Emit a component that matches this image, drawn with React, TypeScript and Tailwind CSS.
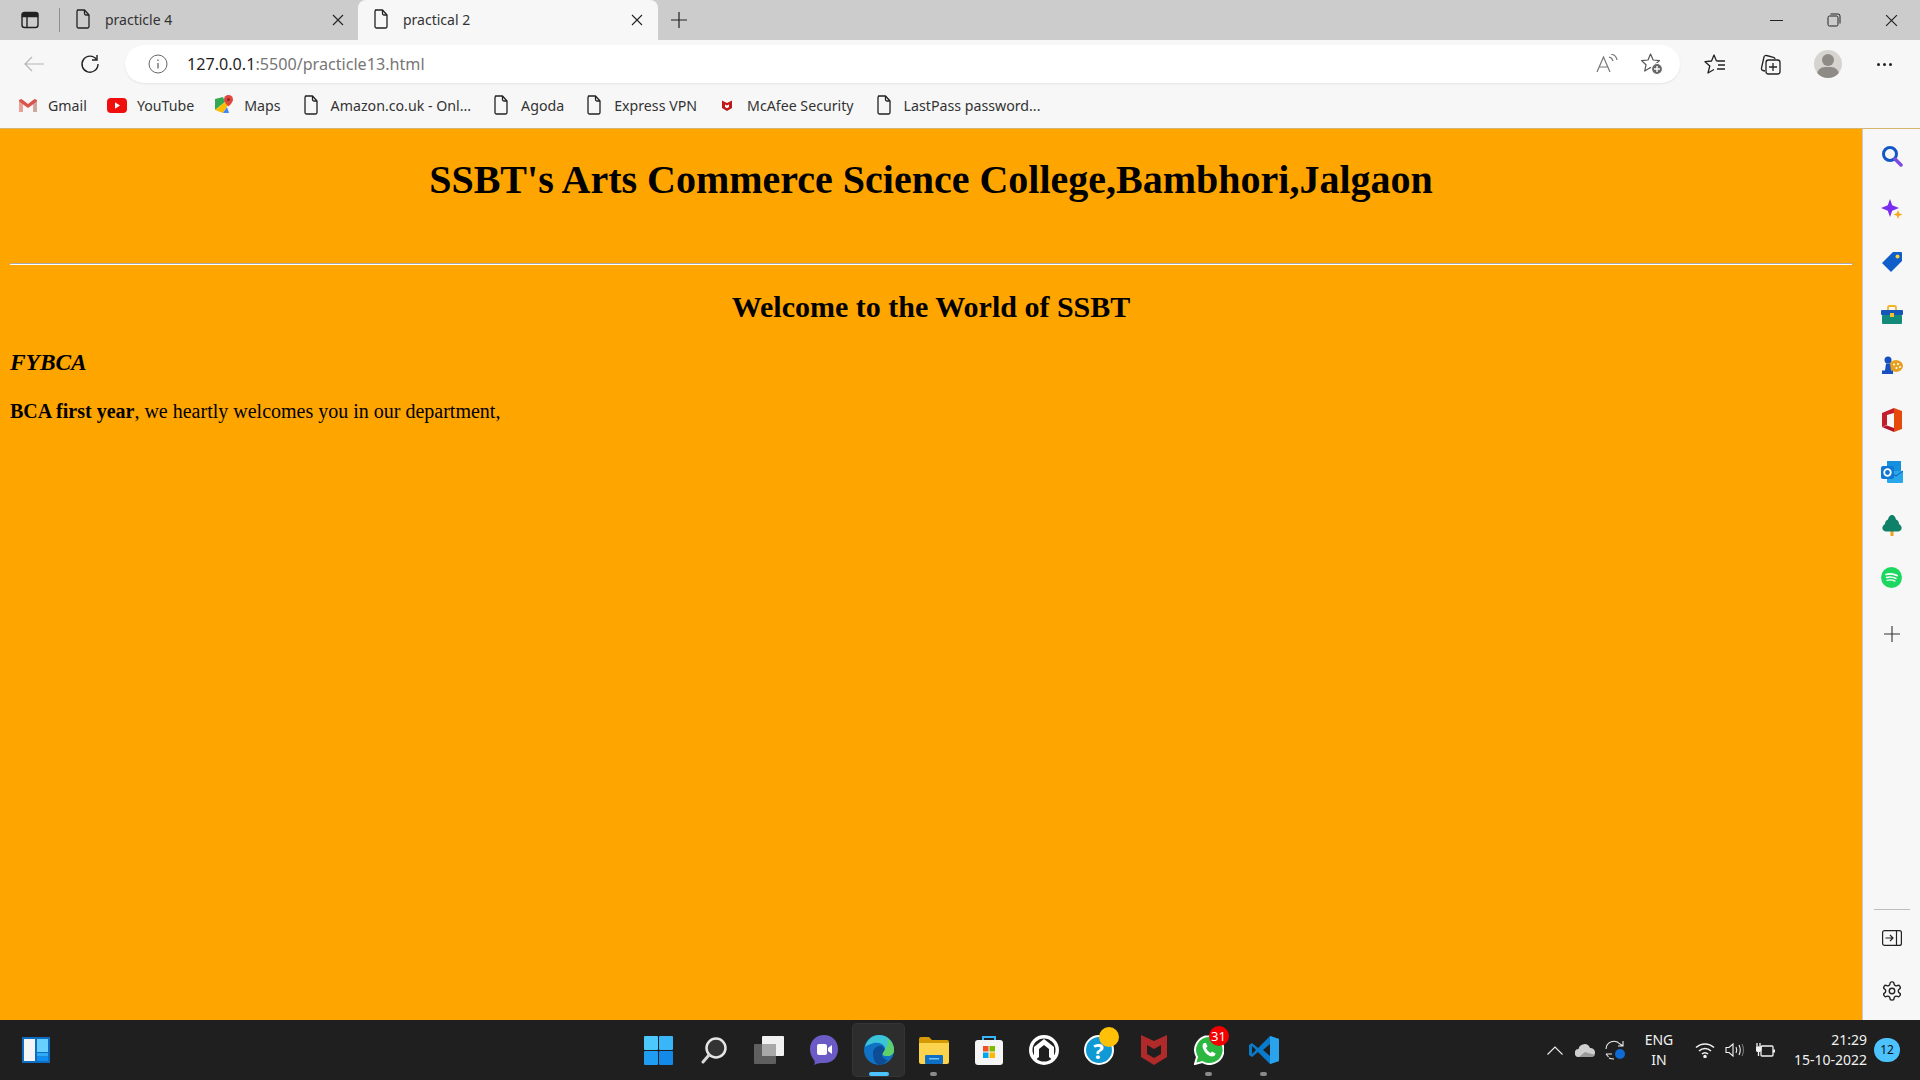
import type { ReactNode } from 'react';

const uiFont = "font-['Noto_Sans','Open_Sans',sans-serif]";

function DocIcon({ className = '' }: { className?: string }) {
  return (
    <svg width="16" height="20" viewBox="0 0 16 20" fill="none" stroke="#222" strokeWidth="1.3" className={className}>
      <path d="M2.5 1h7L14 6v11.5a1.5 1.5 0 0 1-1.5 1.5h-9A1.5 1.5 0 0 1 2 17.5v-15A1.5 1.5 0 0 1 3.500 1z" strokeLinejoin="round" />
      <path d="M9.500 1v3.500a1.500 1.500 0 0 0 1.500 1.500h3" />
    </svg>
  );
}

function CloseIcon({ size = 12, color = '#222' }: { size?: number; color?: string }) {
  return (
    <svg width={size} height={size} viewBox="0 0 12 12" stroke={color} strokeWidth="1.1">
      <path d="M1 1l10 10M11 1L1 11" />
    </svg>
  );
}

function Tab({ title, active }: { title: string; active?: boolean }) {
  return (
    <div className={`flex h-10 items-center ${active ? 'w-[300px] rounded-t-lg bg-[#f7f7f7] pl-[15px] pr-[15px]' : 'w-[298px] pl-[15px] pr-[14px]'}`}>
      <DocIcon className="mb-[2px]" />
      <span className="mb-[2px] ml-[14px] flex-1 text-[14px] text-[#333]">{title}</span>
      <CloseIcon />
    </div>
  );
}

function Bookmark({ icon, label }: { icon: ReactNode; label: string }) {
  return (
    <div className="flex items-center gap-[10px]">
      <span className="flex h-5 w-5 items-center justify-center">{icon}</span>
      <span className="text-[14.2px] text-[#333]">{label}</span>
    </div>
  );
}

const GmailIcon = (
  <svg width="20" height="16" viewBox="0 0 20 16">
    <path d="M1 15V3l2.500-1L10 7l6.500-5L19 3v12h-3.500V7L10 11 4.500 7v8z" fill="#d9534a" />
    <path d="M1 15h3.500V7L1 4z" fill="#e8a09a" />
    <path d="M15.500 15H19V4l-3.500 3z" fill="#c9a9a0" />
  </svg>
);

const YoutubeIcon = (
  <svg width="20" height="15" viewBox="0 0 20 15">
    <rect width="20" height="15" rx="4" fill="#f00d0d" />
    <path d="M8 4.300l5 3.200-5 3.200z" fill="#fff" />
  </svg>
);

const MapsIcon = (
  <svg width="20" height="20" viewBox="0 0 20 20">
    <path d="M1 4l8-2 2 5-10 8z" fill="#34a853" />
    <path d="M1 15l8 3 5-8-3-3z" fill="#fbbc04" />
    <path d="M9 18l6 0-2-6z" fill="#4285f4" />
    <path d="M14.500 0a4.500 4.500 0 0 1 4.500 4.500c0 3-4.500 7-4.500 7S10 7.500 10 4.500A4.500 4.500 0 0 1 14.500 0z" fill="#e0483e" />
    <circle cx="14.500" cy="4.500" r="1.500" fill="#8c2a22" />
  </svg>
);

const McafeeSmall = (
  <svg width="14" height="14" viewBox="0 0 14 14">
    <path d="M2 2.500L7 5l5-2.500V10l-5 3-5-3z" fill="#c01818" />
    <path d="M5 6.500l2 1 2-1v2.500l-2 1.200L5 9z" fill="#fff" />
  </svg>
);

function SidebarIcon({ children, className }: { children: ReactNode; className: string }) {
  return <div className={`flex w-full items-center justify-center ${className}`}>{children}</div>;
}

function TaskItem({ children, dot, active }: { children: ReactNode; dot?: boolean; active?: boolean }) {
  return (
    <div className="relative flex h-[52px] w-[55px] items-center justify-center">
      {active && <span className="absolute inset-x-[2px] inset-y-0 rounded bg-[#2d2d2d] ring-1 ring-[#353535]" />}
      <span className="relative flex items-center justify-center">{children}</span>
      {dot && <span className="absolute bottom-[0px] h-[4px] w-[7px] rounded-full bg-[#8a8a8a]" />}
      {active && <span className="absolute bottom-[0px] h-[4px] w-[20px] rounded-full bg-[#4cc2ff]" />}
    </div>
  );
}

export default function App() {
  return (
    <div className={`flex h-[1080px] w-[1920px] flex-col overflow-hidden bg-[#ffa500] ${uiFont}`}>
      {/* tab strip */}
      <div className="flex h-10 items-center bg-[#cccccc]">
        <div className="flex w-[60px] items-center pl-[20px]">
          <svg width="20" height="18" viewBox="0 0 20 18" fill="none" stroke="#222" strokeWidth="1.4">
            <rect x="2" y="1.500" width="16" height="15" rx="2.500" />
            <path d="M2.500 2.500h15v3h-15z" fill="#222" />
            <path d="M7 5v11" />
          </svg>
          <span className="ml-[19px] h-6 w-px bg-[#8f8f8f]" />
        </div>
        <Tab title="practicle 4" />
        <Tab title="practical 2" active />
        <svg width="18" height="18" viewBox="0 0 18 18" stroke="#222" strokeWidth="1.2" className="ml-[12px]">
          <path d="M9 1v16M1 9h16" />
        </svg>
        <div className="ml-auto flex items-center">
          <span className="h-px w-[13px] bg-[#222]" />
          <svg width="14" height="14" viewBox="0 0 14 14" fill="none" stroke="#222" strokeWidth="1" className="ml-[44px]">
            <rect x="1" y="3" width="10" height="10" rx="1.500" />
            <path d="M3.500 1h7.500a2 2 0 0 1 2 2v7.500" />
          </svg>
          <span className="ml-[44px] mr-[22px]">
            <CloseIcon size={13} />
          </span>
        </div>
      </div>

      {/* address bar */}
      <div className="flex h-12 items-center bg-[#f7f7f7]">
        <svg width="20" height="16" viewBox="0 0 20 16" fill="none" stroke="#b5b5b5" strokeWidth="1.2" className="ml-[24px]">
          <path d="M20 8H1M8 1L1 8l7 7" />
        </svg>
        <svg width="20" height="20" viewBox="0 0 20 20" fill="none" stroke="#222" strokeWidth="1.4" className="ml-[36px]">
          <path d="M16.500 5.500A8 8 0 1 0 18 10" />
          <path d="M17 1v5h-5" />
        </svg>
        <div className="ml-[25px] flex h-[38px] w-[1555px] items-center rounded-full bg-white pl-[23px] shadow-[0_1px_2px_rgba(0,0,0,0.08)]">
          <svg width="20" height="20" viewBox="0 0 20 20" fill="none" stroke="#666" strokeWidth="1">
            <circle cx="10" cy="10" r="9" />
            <path d="M10 9v5.500M10 5.500v1.500" strokeWidth="1.300" />
          </svg>
          <span className="ml-[19px] text-[16.15px] text-[#1f1f1f]">
            127.0.0.1<span className="text-[#767676]">:5500/practicle13.html</span>
          </span>
          <div className="ml-auto flex items-center">
            <svg width="22" height="20" viewBox="0 0 22 20" fill="none" stroke="#777" strokeWidth="1.200">
              <path d="M1 18L7.500 3 14 18M3.500 13h8" />
              <path d="M13 3c2 .5 3.500 2 4 4M15 0c3 .6 5.500 3 6 6" />
            </svg>
            <svg width="24" height="24" viewBox="0 0 24 24" fill="none" stroke="#555" strokeWidth="1.200" className="ml-[22px] mr-[16px]">
              <path d="M10.500 2l2.700 6 6.300.6-4.800 4.200 1 5.700-5.200-3-5.800 3.500 1.300-6.200L1.500 8.600 8 8z" strokeLinejoin="round" />
              <circle cx="17" cy="17" r="5.500" fill="#666" stroke="#fff" />
              <path d="M17 14v6M14 17h6" stroke="#fff" strokeWidth="1.400" />
            </svg>
          </div>
        </div>
        <svg width="22" height="22" viewBox="0 0 22 22" fill="none" stroke="#222" strokeWidth="1.300" className="ml-[24px]">
          <path d="M12.500 8H21M14 12h7M13 16h8M12.500 8L10 2 7.500 8 1 8.700l4.800 4.300L4 20l6-3.500" strokeLinejoin="round" />
        </svg>
        <svg width="22" height="22" viewBox="0 0 22 22" fill="none" stroke="#222" strokeWidth="1.300" className="ml-[33px]">
          <path d="M6 18l-2-.5a2 2 0 0 1-1.500-2.500L5 4a2 2 0 0 1 2.500-1.500l7 1.800a2 2 0 0 1 1.500 1.700" />
          <rect x="7" y="7" width="14" height="14" rx="2.500" />
          <path d="M14 10v8M10 14h8" />
        </svg>
        <div className="relative ml-[33px] h-7 w-7 overflow-hidden rounded-full bg-[#d6d4d0]">
          <span className="absolute left-[8px] top-[4px] h-3 w-3 rounded-full bg-[#8e8a86]" />
          <span className="absolute left-[3px] top-[17px] h-[16px] w-[22px] rounded-full bg-[#8e8a86]" />
        </div>
        <div className="ml-[35px] flex gap-[3px]">
          <span className="h-[3px] w-[3px] rounded-full bg-[#222]" />
          <span className="h-[3px] w-[3px] rounded-full bg-[#222]" />
          <span className="h-[3px] w-[3px] rounded-full bg-[#222]" />
        </div>
      </div>

      {/* bookmarks */}
      <div className="flex h-[41px] items-center gap-5 border-b border-[#d5b570] bg-[#f7f7f7] pb-[5px] pl-[18px]">
        <Bookmark icon={GmailIcon} label="Gmail" />
        <Bookmark icon={YoutubeIcon} label="YouTube" />
        <Bookmark icon={MapsIcon} label="Maps" />
        <Bookmark icon={<DocIcon />} label="Amazon.co.uk - Onl..." />
        <Bookmark icon={<DocIcon />} label="Agoda" />
        <Bookmark icon={<DocIcon />} label="Express VPN" />
        <Bookmark icon={McafeeSmall} label="McAfee Security" />
        <Bookmark icon={<DocIcon />} label="LastPass password..." />
      </div>

      <div className="flex min-h-0 flex-1">
        {/* page */}
        <main className="w-[1862px] px-[10px] font-['Liberation_Serif',serif] text-black">
          <h1 className="mt-[28px] text-center text-[40px] font-bold leading-[46px]">
            SSBT's Arts Commerce Science College,Bambhori,Jalgaon
          </h1>
          <div className="mt-[60px] h-[2px] border-t border-[#a9a9a9] bg-white" />
          <h2 className="mt-[25px] text-center text-[30px] font-bold leading-[34px]">Welcome to the World of SSBT</h2>
          <h3 className="mt-[25px] text-[23.4px] font-bold italic leading-[27px]">FYBCA</h3>
          <p className="mt-[24px] text-[20px] leading-[23px]">
            <b>BCA first year</b>, we heartly welcomes you in our department,
          </p>
        </main>

        {/* edge sidebar */}
        <aside className="relative w-[58px] border-l border-[#c9c9c9] bg-[#f7f7f7]">
          <SidebarIcon className="mt-[15px] h-6">
            <svg width="22" height="22" viewBox="0 0 22 22" fill="none">
              <circle cx="9" cy="9" r="6.500" stroke="#1257c8" strokeWidth="3" />
              <path d="M14 14l6 6" stroke="#7b4ae0" strokeWidth="3.500" strokeLinecap="round" />
            </svg>
          </SidebarIcon>
          <SidebarIcon className="mt-[30px] h-6">
            <svg width="22" height="22" viewBox="0 0 22 22">
              <path d="M9 0l2.200 6.300L18 9l-6.800 2.700L9 18l-2.200-6.300L0 9l6.800-2.700z" fill="#7a2cf0" />
              <path d="M17 11l1.200 3.300 3.300 1.200-3.300 1.200L17 20l-1.200-3.300-3.300-1.200 3.300-1.200z" fill="#f5a818" />
            </svg>
          </SidebarIcon>
          <SidebarIcon className="mt-[28px] h-6">
            <svg width="22" height="22" viewBox="0 0 22 22">
              <path d="M12 1h8a1 1 0 0 1 1 1v8L10 21 1 12z" fill="#0f5ec9" />
              <circle cx="16.500" cy="5.500" r="2" fill="#ffd23c" />
            </svg>
          </SidebarIcon>
          <SidebarIcon className="mt-[29px] h-6">
            <svg width="22" height="20" viewBox="0 0 22 20">
              <path d="M7 5V2.500A1.500 1.500 0 0 1 8.500 1h5A1.500 1.500 0 0 1 15 2.500V5" fill="none" stroke="#f0b429" strokeWidth="1.800" />
              <rect y="5" width="22" height="5" rx="1" fill="#1557b8" />
              <rect x="1" y="10" width="20" height="9" rx="1" fill="#138a7a" />
              <rect x="9" y="8" width="4" height="4" fill="#f5c030" />
            </svg>
          </SidebarIcon>
          <SidebarIcon className="mt-[27px] h-6">
            <svg width="22" height="20" viewBox="0 0 22 20">
              <ellipse cx="15" cy="10" rx="7" ry="6" fill="#e8a020" />
              <circle cx="7" cy="4" r="3.500" fill="#1650c0" />
              <path d="M5 7.500h4l1 7h2V18H1v-3.500h3z" fill="#1650c0" />
              <circle cx="13" cy="8.500" r="1" fill="#fff" />
              <circle cx="17" cy="8" r="1" fill="#fff" />
              <circle cx="19" cy="11" r="1" fill="#fff" />
              <circle cx="15.500" cy="12" r="1" fill="#fff" />
            </svg>
          </SidebarIcon>
          <SidebarIcon className="mt-[30px] h-6">
            <svg width="22" height="24" viewBox="0 0 22 24">
              <path d="M13 0l8 3v18l-8 3z" fill="#e64a0a" />
              <path d="M13 0L1 5v14l5-2V7l7-2z" fill="#c41e2c" />
              <path d="M1 19l12 5v-4l-7-2.500z" fill="#b3122c" />
            </svg>
          </SidebarIcon>
          <SidebarIcon className="mt-[28px] h-6">
            <svg width="22" height="22" viewBox="0 0 22 22">
              <rect x="6" y="0" width="14" height="11" fill="#1490df" />
              <path d="M6 10h16v11a1 1 0 0 1-1 1H7a1 1 0 0 1-1-1z" fill="#28a8ea" />
              <path d="M8 10l7 5 7-5" fill="none" stroke="#0a5fae" strokeWidth="1" />
              <rect y="5" width="13" height="13" rx="2" fill="#0f78d4" />
              <circle cx="6.500" cy="11.500" r="3.300" fill="none" stroke="#fff" strokeWidth="1.800" />
            </svg>
          </SidebarIcon>
          <SidebarIcon className="mt-[30px] h-6">
            <svg width="20" height="22" viewBox="0 0 20 22">
              <rect x="8.500" y="15" width="3" height="6" fill="#f0a020" />
              <path d="M10 0c2.500 0 3.500 2.500 4 4.500 2 .8 3 2.500 3 4.500 2 1 3 3 2.500 5-.5 1.500-2 2.500-3.500 2.500H4C2.500 16.500 1 15.500.5 14 0 12 1 10 3 9c0-2 1-3.700 3-4.500C6.500 2.500 7.500 0 10 0z" fill="#0e8168" />
            </svg>
          </SidebarIcon>
          <SidebarIcon className="mt-[27px] h-6">
            <svg width="21" height="21" viewBox="0 0 21 21" fill="none" stroke="#fff" strokeLinecap="round">
              <circle cx="10.500" cy="10.500" r="10.500" fill="#1ed760" stroke="none" />
              <path d="M5 7.500c3.500-1 7.500-.8 11 1" strokeWidth="1.700" />
              <path d="M5.500 10.500c3-.8 6.500-.5 9.500 1" strokeWidth="1.400" />
              <path d="M6 13.300c2.500-.6 5.500-.4 8 .8" strokeWidth="1.200" />
            </svg>
          </SidebarIcon>
          <SidebarIcon className="mt-[33px] h-6">
            <svg width="16" height="16" viewBox="0 0 16 16" stroke="#333" strokeWidth="1.100">
              <path d="M8 0v16M0 8h16" />
            </svg>
          </SidebarIcon>
          <span className="absolute left-[11px] top-[780px] h-px w-[36px] bg-[#bdbdbd]" />
          <SidebarIcon className="absolute top-[797px] h-6">
            <svg width="20" height="16" viewBox="0 0 20 16" fill="none" stroke="#222" strokeWidth="1.200">
              <rect x="0.600" y="0.600" width="18.800" height="14.800" rx="2" />
              <path d="M14.500 1v14M3.500 8h7M8 5l3 3-3 3" />
            </svg>
          </SidebarIcon>
          <SidebarIcon className="absolute top-[850px] h-6">
            <svg width="22" height="22" viewBox="0 0 24 24" fill="none" stroke="#222" strokeWidth="1.500" strokeLinejoin="round">
              <path d="M12.220 2h-.44a2 2 0 0 0-2 2v.18a2 2 0 0 1-1 1.730l-.43.250a2 2 0 0 1-2 0l-.150-.080a2 2 0 0 0-2.730.730l-.220.380a2 2 0 0 0 .730 2.730l.150.100a2 2 0 0 1 1 1.720v.510a2 2 0 0 1-1 1.740l-.150.090a2 2 0 0 0-.730 2.730l.220.380a2 2 0 0 0 2.730.730l.150-.080a2 2 0 0 1 2 0l.430.250a2 2 0 0 1 1 1.730V20a2 2 0 0 0 2 2h.440a2 2 0 0 0 2-2v-.180a2 2 0 0 1 1-1.730l.430-.250a2 2 0 0 1 2 0l.150.080a2 2 0 0 0 2.730-.730l.220-.390a2 2 0 0 0-.730-2.730l-.150-.080a2 2 0 0 1-1-1.740v-.500a2 2 0 0 1 1-1.740l.150-.090a2 2 0 0 0 .730-2.730l-.220-.380a2 2 0 0 0-2.730-.730l-.150.080a2 2 0 0 1-2 0l-.430-.250a2 2 0 0 1-1-1.730V4a2 2 0 0 0-2-2z" />
              <circle cx="12" cy="12" r="3" />
            </svg>
          </SidebarIcon>
        </aside>
      </div>

      {/* taskbar */}
      <footer className="grid h-[60px] grid-cols-[631px_auto_1fr] items-center bg-[#1f1f1f]">
        <div className="pl-[22px]">
          <svg width="28" height="26" viewBox="0 0 28 26">
            <rect width="28" height="26" fill="#0f6cc0" />
            <rect x="2" y="2" width="11" height="22" fill="#f4f4f4" />
            <rect x="15" y="2" width="11" height="13" fill="#67d0ff" />
            <rect x="15" y="16" width="11" height="3.500" fill="#30aaf5" />
            <rect x="15" y="20" width="11" height="4" fill="#0f8df0" />
          </svg>
        </div>
        <div className="flex items-center">
          <TaskItem>
            <svg width="29" height="29" viewBox="0 0 29 29">
              <rect width="14" height="14" rx="1" fill="#4cc8fb" />
              <rect x="15" width="14" height="14" rx="1" fill="#38b6f8" />
              <rect y="15" width="14" height="14" rx="1" fill="#1f9df2" />
              <rect x="15" y="15" width="14" height="14" rx="1" fill="#1389ea" />
            </svg>
          </TaskItem>
          <TaskItem>
            <svg width="28" height="28" viewBox="0 0 28 28" fill="none">
              <circle cx="16" cy="12" r="9.500" fill="#333" stroke="#e6e6e6" strokeWidth="2.500" />
              <path d="M9 19l-6 7" stroke="#d8d8d8" strokeWidth="3" strokeLinecap="round" />
            </svg>
          </TaskItem>
          <TaskItem>
            <svg width="30" height="28" viewBox="0 0 30 28">
              <rect x="8" y="0" width="22" height="20" rx="1" fill="#f1f1f1" />
              <rect x="0" y="8" width="22" height="20" rx="1" fill="#666" fillOpacity="0.9" />
              <rect x="8" y="8" width="14" height="12" fill="#a9a9a9" />
            </svg>
          </TaskItem>
          <TaskItem>
            <svg width="28" height="30" viewBox="0 0 28 30">
              <path d="M14 0c8 0 14 6 14 14s-5 14-14 14c-3 0-6 0-10 2 1-2 1-3 0-5C1 21 0 18 0 14 0 6 6 0 14 0z" fill="#6b5bc4" />
              <rect x="7" y="9" width="10" height="11" rx="2" fill="#fff" />
              <path d="M18 13l4-3v9l-4-3z" fill="#fff" />
            </svg>
          </TaskItem>
          <TaskItem active>
            <svg width="30" height="30" viewBox="0 0 30 30">
              <circle cx="15" cy="15" r="15" fill="#0f72c4" />
              <path d="M1 12C3 4 9 0 15 0c8 0 15 6 15 15 0 4-3 6-7 6-3 0-5-1-5-3 3-1 4-4 2-7-3-4-9-4-13-2-3 1-5 2-6 3z" fill="#3bc4d8" />
              <path d="M30 15c0-5-3-10-8-12 3 3 3 9-4 15 0 2 2 3 5 3 4 0 7-2 7-6z" fill="#5fd068" />
              <path d="M9 18c0-5 5-8 9-7 2 1 3 3 2 5-2 3-3 6 1 8 1 1 2 1 3 1-3 3-6 5-9 5-5-2-6-8-6-12z" fill="#0c4d95" />
            </svg>
          </TaskItem>
          <TaskItem dot>
            <svg width="30" height="28" viewBox="0 0 30 28">
              <path d="M0 3a2 2 0 0 1 2-2h8l3 3h15a2 2 0 0 1 2 2v6H0z" fill="#d69a06" />
              <path d="M0 7h30v19a2 2 0 0 1-2 2H2a2 2 0 0 1-2-2z" fill="#fcd34d" />
              <rect x="6" y="19" width="18" height="9" rx="1" fill="#0f6fc4" />
              <rect x="10" y="22" width="10" height="1.500" fill="#7cc4f5" />
            </svg>
          </TaskItem>
          <TaskItem>
            <svg width="28" height="30" viewBox="0 0 28 30">
              <path d="M8 6V2h12v4" fill="none" stroke="#38b6f8" strokeWidth="2" />
              <rect y="5" width="28" height="25" rx="3" fill="#f5f5f5" />
              <rect x="8" y="11" width="5.500" height="5.500" fill="#f25022" />
              <rect x="14.500" y="11" width="5.500" height="5.500" fill="#7fba00" />
              <rect x="8" y="17.500" width="5.500" height="5.500" fill="#00a4ef" />
              <rect x="14.500" y="17.500" width="5.500" height="5.500" fill="#ffb900" />
            </svg>
          </TaskItem>
          <TaskItem>
            <svg width="30" height="30" viewBox="0 0 30 30">
              <circle cx="15" cy="15" r="15" fill="#fff" />
              <circle cx="15" cy="15" r="11.500" fill="#1f1f1f" />
              <path d="M15 4l10 8v14l-5-4V14l-5-4-5 4v8l-5 4V12z" fill="#fff" />
            </svg>
          </TaskItem>
          <TaskItem>
            <div className="relative h-[30px] w-[30px]">
              <div className="flex h-[30px] w-[30px] items-center justify-center rounded-full border-2 border-white bg-[#0f9ad6] text-[22px] font-bold leading-none text-white">?</div>
              <span className="absolute left-[15px] top-[-8px] h-5 w-5 rounded-full bg-[#ffc107]" />
            </div>
          </TaskItem>
          <TaskItem>
            <svg width="26" height="30" viewBox="0 0 26 30">
              <path d="M0 0l13 6 13-6v22l-13 8-13-8z" fill="#b02a2a" />
              <path d="M6 10l7 4 7-4v9l-7 4-7-4z" fill="#1f1f1f" />
            </svg>
          </TaskItem>
          <TaskItem dot>
            <div className="relative">
              <svg width="30" height="30" viewBox="0 0 30 30">
                <path d="M15 1a14 14 0 0 0-12 21L1 29l7.300-2A14 14 0 1 0 15 1z" fill="#2bb741" stroke="#fff" strokeWidth="2" />
                <path d="M10 8c-2 1.500-2 4 0 7.500 2 3.500 5 6 8 6 2 0 3.500-1 3.500-3l-3.500-2-1.500 1.500c-2-1-3.500-3-4.500-5l1.500-1.500-1.500-3.500z" fill="#fff" />
              </svg>
              <span className="absolute left-[15px] top-[-9px] flex h-5 w-5 items-center justify-center rounded-full bg-[#f50000] text-[13px] leading-none text-white">31</span>
            </div>
          </TaskItem>
          <TaskItem dot>
            <svg width="30" height="30" viewBox="0 0 30 30">
              <path d="M21 1L9 13 3 8 0 10v10l3 2 6-5 12 12 9-3V4z" fill="#0a7acb" />
              <path d="M21 1l9 3v22l-9 3z" fill="#2aa3ec" />
              <path d="M21 9l-7 6 7 6z" fill="#1f1f1f" />
              <path d="M3 11l4 4-4 4z" fill="#1f1f1f" />
            </svg>
          </TaskItem>
        </div>

        {/* tray */}
        <div className="flex items-center justify-end pr-[20px] text-[14px] leading-[20px] text-[#f2f2f2]">
          <svg width="16" height="9" viewBox="0 0 16 9" fill="none" stroke="#eee" strokeWidth="1.100">
            <path d="M0.500 8.500L8 1l7.500 7.500" />
          </svg>
          <svg width="20" height="14" viewBox="0 0 20 14" className="ml-[12px]">
            <path d="M4 14a4 4 0 0 1-.5-8A6 6 0 0 1 15 5a4.500 4.500 0 0 1 1 9z" fill="#cfcfcf" />
            <path d="M4 14l6-5 10 3c-.5 1-2 2-4 2z" fill="#9a9a9a" />
          </svg>
          <svg width="22" height="22" viewBox="0 0 22 22" fill="none" stroke="#eee" strokeWidth="1.100" className="ml-[9px]">
            <path d="M2 10a8 8 0 0 1 14-5l3 2M19 2v5h-5" />
            <path d="M2 15h6M2 15l2.500 3M5 19c2 1 3 1 5 1" />
            <circle cx="16" cy="15" r="5" fill="#0f6cd6" stroke="none" />
          </svg>
          <div className="ml-[17px] w-[32px] text-center">
            ENG
            <br />
            IN
          </div>
          <svg width="20" height="16" viewBox="0 0 20 16" fill="none" stroke="#f2f2f2" strokeWidth="1.500" className="ml-[20px]">
            <path d="M1 5.500a13 13 0 0 1 18 0M4 9a8.500 8.500 0 0 1 12 0M7 12a4 4 0 0 1 6 0" />
            <circle cx="10" cy="14.500" r="1" fill="#f2f2f2" />
          </svg>
          <svg width="20" height="16" viewBox="0 0 20 16" fill="none" stroke="#f2f2f2" strokeWidth="1.100" className="ml-[10px]">
            <path d="M1 5.500h3L8 2v12l-4-3.500H1z" />
            <path d="M11 5c1 2 1 4 0 6M14 3c1.500 3 1.500 7 0 10" />
            <path d="M17 2c2 4 2 8 0 12" stroke="#777" />
          </svg>
          <svg width="20" height="16" viewBox="0 0 20 16" fill="none" stroke="#f2f2f2" strokeWidth="1.300" className="ml-[11px]">
            <rect x="5" y="4" width="12" height="10" rx="1" />
            <path d="M18 7.500v3" strokeWidth="2" />
            <path d="M1 1v3M4 1v3M0 5h5v2a2.500 2.500 0 0 1-5 0zM2.500 9v5" fill="#f2f2f2" />
          </svg>
          <div className="ml-[6px] w-[85px] whitespace-nowrap text-right">
            21:29
            <br />
            15-10-2022
          </div>
          <span className="ml-[7px] flex h-[24px] w-[26px] items-center justify-center rounded-full bg-[#4cc2ff] text-[12px] leading-none text-[#111]">12</span>
        </div>
      </footer>
    </div>
  );
}
